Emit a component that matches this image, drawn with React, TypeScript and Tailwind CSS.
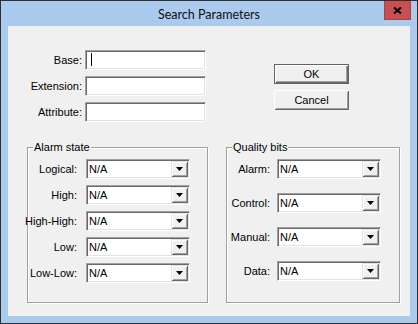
import React from "react";

const sunken =
  "border border-t-[#a0a0a0] border-l-[#a0a0a0] border-r-white border-b-white shadow-[inset_1px_1px_0_#696969,inset_-1px_-1px_0_#e3e3e3]";

function TextBox({ caret }: { caret?: boolean }) {
  return (
    <div className={`w-[121px] h-[20px] bg-white ${sunken} flex items-center`}>
      {caret && <div className="ml-[5px] mt-[-2px] w-px h-[13px] bg-black" />}
    </div>
  );
}

function Combo() {
  return (
    <div className={`w-[104px] h-[20px] bg-white ${sunken} flex items-stretch p-px`}>
      <div className="flex-1 flex items-center pl-[1px] text-[11px] leading-[13px] text-black">N/A</div>
      <div className="w-[17px] bg-[#f0f0f0] shadow-[inset_1px_1px_0_#e3e3e3,inset_-1px_-1px_0_#696969,inset_2px_2px_0_white,inset_-2px_-2px_0_#a0a0a0] flex items-center justify-center">
        <svg width="7" height="4" viewBox="0 0 7 4">
          <path d="M0 0H7L3.5 4Z" fill="#000" />
        </svg>
      </div>
    </div>
  );
}

function FieldRow({ label, caret }: { label: string; caret?: boolean }) {
  return (
    <div className="flex items-center h-[20px]">
      <div className="w-[74px] text-right whitespace-nowrap">{label}</div>
      <div className="ml-[3px]">
        <TextBox caret={caret} />
      </div>
    </div>
  );
}

function ComboRow({ label, labelW, gap }: { label: string; labelW: string; gap: string }) {
  return (
    <div className="flex items-center h-[20px]">
      <div className={`${labelW} flex justify-end whitespace-nowrap`}>{label}</div>
      <div className={gap}>
        <Combo />
      </div>
    </div>
  );
}

function Button({ label, def }: { label: string; def?: boolean }) {
  return (
    <div
      className={
        def
          ? "w-[75px] h-[20px] bg-[#f0f0f0] border border-[#646464] shadow-[inset_1px_1px_0_white,inset_-1px_-1px_0_#696969,inset_-2px_-2px_0_#a0a0a0] flex items-center justify-center"
          : "w-[75px] h-[20px] bg-[#f0f0f0] shadow-[inset_1px_1px_0_white,inset_-1px_-1px_0_#696969,inset_2px_2px_0_#f0f0f0,inset_-2px_-2px_0_#a0a0a0] flex items-center justify-center"
      }
    >
      {label}
    </div>
  );
}

function Group({
  title,
  width,
  gap,
  children,
}: {
  title: string;
  width: string;
  gap: string;
  children: React.ReactNode;
}) {
  return (
    <div
      className={`relative ${width} h-[156px] border border-[#a0a0a0] shadow-[inset_1px_1px_0_white,1px_1px_0_white]`}
    >
      <div className="absolute left-[5px] top-[-7px] px-[1px] bg-[#f0f0f0] leading-[13px] whitespace-nowrap">
        {title}
      </div>
      <div className={`pt-[11px] flex flex-col ${gap}`}>{children}</div>
    </div>
  );
}

export default function App() {
  return (
    <div className="w-[418px] h-[324px] border border-[#2f2f2f] bg-[#aacbee] flex flex-col font-['Liberation_Sans',Arial,sans-serif] text-[11px] leading-[13px] text-black">
      <div className="relative h-[25px] flex items-center justify-center">
        <span className="font-['Lato',sans-serif] text-[12.5px] leading-[16px] text-[#111] mt-[2px]">
          Search Parameters
        </span>
        <div className="absolute top-0 right-[6px] w-[27px] h-[19px] bg-[#c75050] border border-[#a84444] border-t-0 flex items-center justify-center">
          <svg width="9" height="7" viewBox="0 0 9 7">
            <path d="M1 0.5L8 6.5M8 0.5L1 6.5" stroke="#000" strokeWidth="2" />
          </svg>
        </div>
      </div>
      <div className="mx-[7px] w-[402px] h-[290px] bg-[#f0f0f0] flex flex-col">
        <div className="h-[121px] flex items-start">
          <div className="mt-[24px] flex flex-col gap-[6px]">
            <FieldRow label="Base:" caret />
            <FieldRow label="Extension:" />
            <FieldRow label="Attribute:" />
          </div>
          <div className="ml-[68px] mt-[38px] flex flex-col gap-[6px]">
            <Button label="OK" def />
            <Button label="Cancel" />
          </div>
        </div>
        <div className="flex ml-[19px]">
          <Group title="Alarm state" width="w-[181px]" gap="gap-[6px]">
            <ComboRow label="Logical:" labelW="w-[49px]" gap="ml-[9px]" />
            <ComboRow label="High:" labelW="w-[49px]" gap="ml-[9px]" />
            <ComboRow label="High-High:" labelW="w-[49px]" gap="ml-[9px]" />
            <ComboRow label="Low:" labelW="w-[49px]" gap="ml-[9px]" />
            <ComboRow label="Low-Low:" labelW="w-[49px]" gap="ml-[9px]" />
          </Group>
          <div className="ml-[18px]">
            <Group title="Quality bits" width="w-[174px]" gap="gap-[14px]">
              <ComboRow label="Alarm:" labelW="w-[43px]" gap="ml-[7px]" />
              <ComboRow label="Control:" labelW="w-[43px]" gap="ml-[7px]" />
              <ComboRow label="Manual:" labelW="w-[43px]" gap="ml-[7px]" />
              <ComboRow label="Data:" labelW="w-[43px]" gap="ml-[7px]" />
            </Group>
          </div>
        </div>
      </div>
    </div>
  );
}
